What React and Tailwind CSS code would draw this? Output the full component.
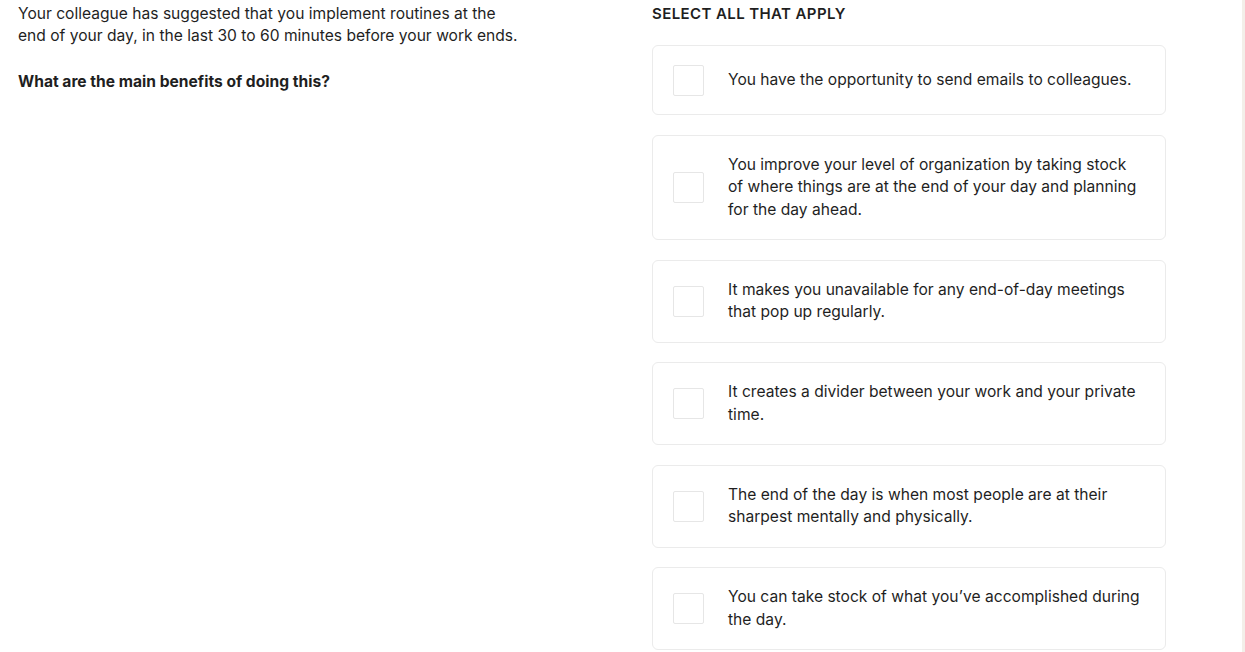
import { useState } from "react";

const OPTIONS = [
  "You have the opportunity to send emails to colleagues.",
  "You improve your level of organization by taking stock of where things are at the end of your day and planning for the day ahead.",
  "It makes you unavailable for any end-of-day meetings that pop up regularly.",
  "It creates a divider between your work and your private time.",
  "The end of the day is when most people are at their sharpest mentally and physically.",
  "You can take stock of what you\u2019ve accomplished during the day.",
];

function Option({ text, checked, onToggle }) {
  return (
    <button
      type="button"
      onClick={onToggle}
      className="flex items-center min-h-[70px] w-full rounded-md border border-[#ebebeb] bg-white pl-[20px] pr-[24px] py-[18px] text-left"
    >
      <span
        className={
          "w-[31px] h-[31px] flex-shrink-0 rounded-[2px] border " +
          (checked ? "border-[#1a1a1a] bg-[#1a1a1a]" : "border-[#e6e6e6] bg-white")
        }
      />
      <span className="ml-[24px] text-[15.6px] leading-[22.5px] text-[#1f1f1f]">{text}</span>
    </button>
  );
}

export default function App() {
  const [selected, setSelected] = useState([]);

  const toggle = (i) =>
    setSelected((s) => (s.includes(i) ? s.filter((x) => x !== i) : [...s, i]));

  return (
    <div className="min-h-[652px] w-full bg-white font-['Inter',sans-serif] text-[#1f1f1f] flex">
      <div className="flex-1 flex pl-[18px] pt-[3px]">
        {/* question */}
        <div className="w-[616px] flex-shrink-0">
          <p className="text-[15.6px] leading-[22px] w-[505px]">
            Your colleague has suggested that you implement routines at the end of your day, in the last 30 to 60 minutes before your work ends.
          </p>
          <p className="mt-[24px] text-[15.6px] leading-[22px] font-bold">
            What are the main benefits of doing this?
          </p>
        </div>

        {/* answers */}
        <div className="w-[514px] ml-[18px] flex-shrink-0">
          <h2 className="text-[15px] leading-[22px] font-semibold tracking-[0.4px] uppercase">
            Select all that apply
          </h2>
          <div className="mt-[20px] flex flex-col gap-[19.5px]">
            {OPTIONS.map((t, i) => (
              <Option key={i} text={t} checked={selected.includes(i)} onToggle={() => toggle(i)} />
            ))}
          </div>
        </div>
      </div>
      <div className="w-[3px] flex-shrink-0 bg-[#f3efe9]" />
    </div>
  );
}
